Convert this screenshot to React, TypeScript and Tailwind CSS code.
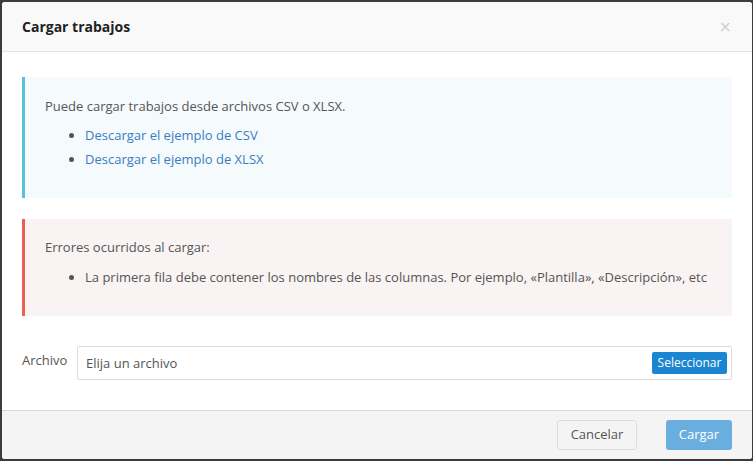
import React from "react";

export default function App() {
  return (
    <div
      className="w-[753px] h-[461px] bg-[#3c3c3c] pt-[2px] pl-[2px] pr-[1px] pb-[2px] overflow-hidden"
      style={{ fontFamily: '"Open Sans", "Liberation Sans", sans-serif' }}
    >
      <div className="w-[750px] h-[457px] bg-white rounded-[3px] flex flex-col overflow-hidden text-[13px] text-[#555]">
        {/* Header */}
        <div className="h-[50px] shrink-0 bg-[#f9f9f9] border-b border-[#e3e3e3] flex items-center justify-between pl-[20px] pr-[21px]">
          <h4 className="text-[14px] font-bold text-[#222] leading-none">Cargar trabajos</h4>
          <span className="text-[#cfcfcf] text-[20px] leading-none">×</span>
        </div>

        {/* Body */}
        <div className="flex-1 pt-[25px] pl-[20px] pr-[20px]">
          <div className="bg-[#f5fafd] border-l-[3px] border-[#5bc0de] pl-[20px] pt-[20px] pb-[27px]">
            <p className="leading-[19px]">Puede cargar trabajos desde archivos CSV o XLSX.</p>
            <ul className="mt-[7px] pl-[40px] list-disc marker:text-[#555]">
              <li className="leading-[24px] text-[#3a7dc1]">Descargar el ejemplo de CSV</li>
              <li className="leading-[24px] text-[#3a7dc1]">Descargar el ejemplo de XLSX</li>
            </ul>
          </div>

          <div className="mt-[21px] bg-[#f9f3f3] border-l-[3px] border-[#e8624f] pl-[20px] pt-[19px] pb-[27px]">
            <p className="leading-[19px]">Errores ocurridos al cargar:</p>
            <ul className="mt-[8px] pl-[40px] list-disc">
              <li className="leading-[24px]">
                La primera fila debe contener los nombres de las columnas. Por ejemplo, «Plantilla», «Descripción», etc
              </li>
            </ul>
          </div>

          <div className="mt-[30px] flex items-start">
            <label className="w-[55px] shrink-0 leading-[19px] pt-[5px]">Archivo</label>
            <div className="flex-1 h-[34px] border border-[#dcdcdc] rounded-[2px] flex items-center justify-between pl-[8px] pr-[4px]">
              <span className="text-[#555] pt-[2px]">Elija un archivo</span>
              <button className="h-[22px] w-[75px] bg-[#1a86d2] text-white text-[12px] rounded-[2px] leading-none">
                Seleccionar
              </button>
            </div>
          </div>
        </div>

        {/* Footer */}
        <div className="h-[49px] shrink-0 bg-[#f4f4f4] border-t border-[#d9d9d9] flex items-start justify-end gap-[29px] pt-[9px] pr-[20px]">
          <button className="h-[30px] w-[80px] border border-[#dddddd] bg-[#f4f4f4] rounded-[3px] text-[#555] text-[13px]">
            Cancelar
          </button>
          <button className="h-[30px] w-[66px] bg-[#69aedf] text-white rounded-[3px] text-[13px]">
            Cargar
          </button>
        </div>
      </div>
    </div>
  );
}
